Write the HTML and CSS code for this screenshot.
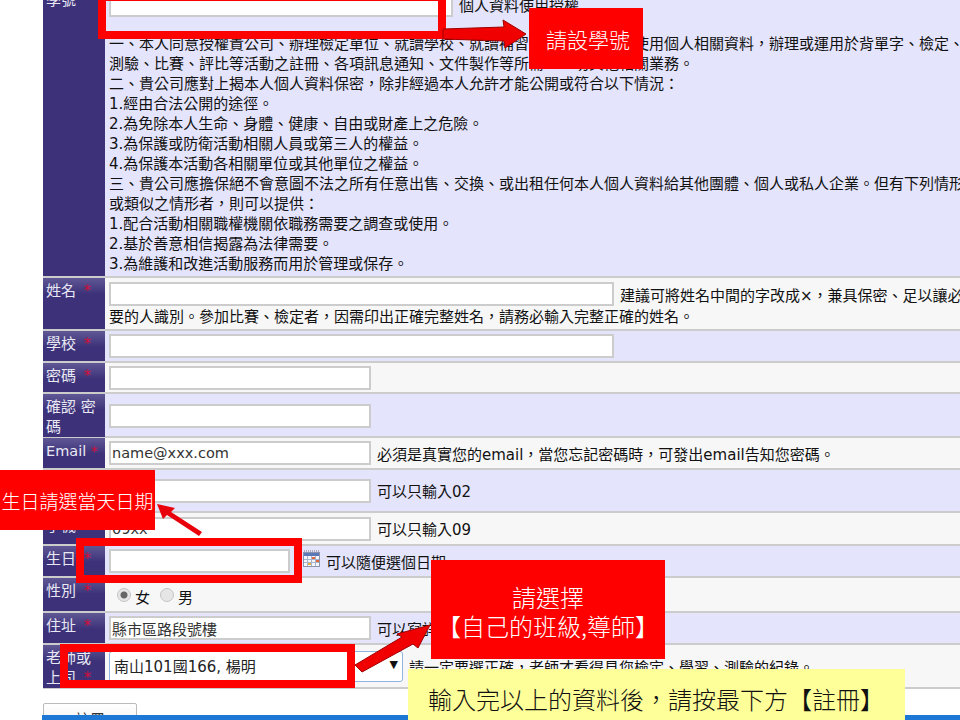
FILE: index.html
```html
<!DOCTYPE html>
<html lang="zh-Hant">
<head>
    <meta charset="UTF-8">
    <meta name="viewport" content="width=device-width, initial-scale=1.0">
    <title>註冊</title>
    <link rel="stylesheet" href="styles.css">
</head>
<body>

<form class="signup">
    <div class="row odd">
        <label class="name">學號 <span class="star">*</span></label>
        <div class="field block">
            <div class="line-input">
                <input type="text" class="input-wide">
                <span>個人資料使用授權</span>
            </div>
            <div class="terms">
                一、本人同意授權貴公司、辦理檢定單位、就讀學校、就讀補習班或相關單位，使用個人相關資料，辦理或運用於背單字、檢定、學習、<br>
                測驗、比賽、評比等活動之註冊、各項訊息通知、文件製作等所需、一切其他相關業務。<br>
                二、貴公司應對上揭本人個人資料保密，除非經過本人允許才能公開或符合以下情況：<br>
                1.經由合法公開的途徑。<br>
                2.為免除本人生命、身體、健康、自由或財產上之危險。<br>
                3.為保護或防衛活動相關人員或第三人的權益。<br>
                4.為保護本活動各相關單位或其他單位之權益。<br>
                三、貴公司應擔保絕不會意圖不法之所有任意出售、交換、或出租任何本人個人資料給其他團體、個人或私人企業。但有下列情形<br>
                或類似之情形者，則可以提供：<br>
                1.配合活動相關職權機關依職務需要之調查或使用。<br>
                2.基於善意相信揭露為法律需要。<br>
                3.為維護和改進活動服務而用於管理或保存。
            </div>
        </div>
    </div>

    <div class="row even">
        <label class="name">姓名 <span class="star">*</span></label>
        <div class="field block name-field">
            <div class="line-input">
                <input type="text" class="input-long">
                <span>建議可將姓名中間的字改成×，兼具保密、足以讓必</span>
            </div>
            <div class="terms">要的人識別。參加比賽、檢定者，因需印出正確完整姓名，請務必輸入完整正確的姓名。</div>
        </div>
    </div>

    <div class="row odd">
        <label class="name">學校 <span class="star">*</span></label>
        <div class="field"><input type="text" class="input-long"></div>
    </div>

    <div class="row even">
        <label class="name">密碼 <span class="star">*</span></label>
        <div class="field"><input type="password" class="input-short"></div>
    </div>

    <div class="row odd">
        <label class="name">確認 密碼</label>
        <div class="field"><input type="password" class="input-short"></div>
    </div>

    <div class="row even">
        <label class="name name-latin">Email <span class="star">*</span></label>
        <div class="field">
            <input type="text" class="input-short latin" value="name@xxx.com">
            <span>必須是真實您的email，當您忘記密碼時，可發出email告知您密碼。</span>
        </div>
    </div>

    <div class="row odd">
        <label class="name">電話 <span class="star">*</span></label>
        <div class="field">
            <input type="text" class="input-short latin" value="02xx">
            <span>可以只輸入02</span>
        </div>
    </div>

    <div class="row even">
        <label class="name">手機 <span class="star">*</span></label>
        <div class="field">
            <input type="text" class="input-short latin" value="09xx">
            <span>可以只輸入09</span>
        </div>
    </div>

    <div class="row odd">
        <label class="name">生日 <span class="star">*</span></label>
        <div class="field">
            <input type="text" class="input-date">
            <svg class="calendar" width="18" height="18" viewBox="0 0 18 18">
                <rect x="0.500" y="2.500" width="16" height="14" fill="#f4f6fb" stroke="#8a94ac"/>
                <path d="M1 1h15" stroke="#777" stroke-dasharray="1 1"/>
                <rect x="1" y="3" width="15" height="3" fill="#5c78b8"/>
                <path d="M1 9.500h15M1 12.500h15M4.500 6v10M8.500 6v10M12.500 6v10" stroke="#a9b4cc"/>
                <rect x="9" y="7" width="3" height="2" fill="#e2693c"/>
                <rect x="13" y="10" width="3" height="2" fill="#e2693c"/>
                <rect x="5" y="13" width="3" height="2" fill="#e8b23c"/>
            </svg>
            <span>可以隨便選個日期</span>
        </div>
    </div>

    <div class="row even">
        <label class="name">性別 <span class="star">*</span></label>
        <div class="field gender">
            <input type="radio" name="gender" checked><span>女</span>
            <input type="radio" name="gender"><span>男</span>
        </div>
    </div>

    <div class="row odd">
        <label class="name">住址 <span class="star">*</span></label>
        <div class="field">
            <input type="text" class="input-short" value="縣市區路段號樓">
            <span>可以寫詳細地址</span>
        </div>
    </div>

    <div class="row even">
        <label class="name">老師或上司 <span class="star">*</span></label>
        <div class="field">
            <div class="select-wrap">
                <select class="teacher">
                    <option>南山101國166, 楊明</option>
                </select>
                <span class="select-arrow">▼</span>
            </div>
            <span>請一定要選正確，老師才看得見您檢定、學習、測驗的紀錄。</span>
        </div>
    </div>
</form>

<div class="actions">
    <button type="button">註冊</button>
</div>
<div class="footer-bar"></div>

<!-- teacher's annotations on top of the screenshot -->
<div class="frame frame-id"></div>
<div class="frame frame-birthday"></div>
<div class="frame frame-teacher"></div>

<svg class="arrows" width="960" height="720" viewBox="0 0 960 720">
    <polygon class="arrow-big" points="443,29 504,27 503,20 526,34 505,48 504,41 443,39"/>
    <polygon class="arrow-thin" points="157,504 175,508 171,512 202,532 199,536 167,515 163,519"/>
    <polygon class="arrow-big" points="355,665 402,637 397,634 430,625 418,648 413,644 362,672"/>
</svg>

<div class="note note-id">請設學號</div>
<div class="note note-birthday">生日請選當天日期</div>
<div class="note note-teacher">請選擇<br>【自己的班級,導師】</div>
<div class="note-yellow">輸入完以上的資料後，請按最下方【註冊】</div>

</body>
</html>
```

FILE: styles.css
```css
html, body {
    margin: 0;
    height: 720px;
    overflow: hidden;
    background: white;
}
body {
    font-family: "DejaVu Sans", "Noto Sans CJK TC", sans-serif;
    font-size: 15px;
    color: #111;
    position: relative;
}

/* form table */
.signup {
    display: grid;
    grid-template-rows: 288px 53px 32px 31px 44px 32px 43px 33px 32px 35px 32px 44px;
    width: 917px;
    margin: -10px 0 0 43px;
}
.row {
    display: grid;
    grid-template-columns: 62px 1fr;
    border-bottom: 2px solid #ccc;
    box-sizing: border-box;
    min-width: 0;
}
.odd {
    background: #e4e4fc;
}
.even {
    background: #f7f7f7;
}
.name {
    background: linear-gradient(#5f5795, #3d3279 16px);
    color: #e8e8f4;
    padding: 3px 3px 0;
    line-height: 20px;
}
.name-latin {
    white-space: nowrap;
    font-size: 14.500px;
}
.star {
    color: #d0103a;
    margin-left: 3px;
}
.name-latin .star {
    margin-left: 0;
}
.row:first-child .name {
    background: #3d3279;
    padding-top: 0;
}
.field {
    display: flex;
    align-items: center;
    gap: 6px;
    padding: 0 0 0 4px;
    white-space: nowrap;
    min-width: 0;
}
.block {
    display: block;
}
.name-field {
    padding-top: 4px;
}
.line-input {
    display: flex;
    align-items: center;
    gap: 6px;
}
.terms {
    line-height: 20px;
}
.row:first-child .line-input {
    height: 44px;
    padding-bottom: 15px;
    box-sizing: border-box;
}
.name-field .terms {
    margin-top: 1px;
}

input[type="text"], input[type="password"] {
    box-sizing: border-box;
    height: 24px;
    padding: 0 1px;
    border: 2px solid #ccc;
    background: white;
    font: inherit;
    color: #333;
}
input.latin {
    font-size: 14.500px;
}
.input-wide {
    width: 344px;
    flex: none;
}
.input-long {
    width: 505px;
    flex: none;
}
.input-short {
    width: 262px;
}
.input-date {
    width: 181px;
}
.calendar {
    margin-left: 7px;
    margin-right: -1px;
    margin-bottom: 5px;
}

.gender {
    gap: 0;
    padding-left: 9px;
}
.gender input {
    appearance: none;
    box-sizing: border-box;
    margin: 0 4px 0 3px;
    width: 14px;
    height: 14px;
    border: 1px solid #c4c4c4;
    border-radius: 50%;
    background: #e6e6e6;
}
.gender input:checked {
    background: radial-gradient(circle, #666 3px, #e6e6e6 4px);
}
.gender span {
    margin-right: 7px;
    padding-top: 4px;
}

.select-wrap {
    position: relative;
}
.teacher {
    appearance: none;
    width: 294px;
    height: 31px;
    padding: 0 4px;
    border: 1px solid #8fb4e0;
    border-radius: 3px;
    background: white;
    font: inherit;
    color: #222;
}
.select-arrow {
    position: absolute;
    right: 5px;
    top: 7px;
    font-size: 11px;
}

.actions {
    height: 26px;
    box-sizing: border-box;
    padding: 14px 0 0 43px;
    overflow: hidden;
}
button {
    width: 94px;
    height: 30px;
    border: 1px solid #bbb;
    border-radius: 2px;
    background: linear-gradient(#fff, #ececec);
    font: inherit;
    color: #333;
}
.footer-bar {
    height: 5px;
    margin-left: 42px;
    background: #1c78d4;
}

/* annotations */
.frame {
    position: absolute;
    box-sizing: border-box;
    border: 8px solid #f00;
}
.frame-id {
    left: 98px;
    top: -7px;
    width: 348px;
    height: 46px;
}
.frame-birthday {
    left: 76px;
    top: 538px;
    width: 226px;
    height: 45px;
}
.frame-teacher {
    left: 60px;
    top: 644px;
    width: 295px;
    height: 44px;
}
.arrows {
    position: absolute;
    left: 0;
    top: 0;
}
.arrow-big {
    fill: #f00000;
    stroke: #a00000;
}
.arrow-thin {
    fill: #e8000a;
}
.note {
    position: absolute;
    background: #f00;
    color: white;
    text-align: center;
    font-family: "Noto Sans CJK TC", sans-serif;
    font-weight: 300;
}
.note-id {
    left: 529px;
    top: 8px;
    width: 114px;
    height: 61px;
    box-sizing: border-box;
    padding-left: 4px;
    font-size: 21px;
    line-height: 62px;
}
.note-birthday {
    left: 0;
    top: 470px;
    width: 155px;
    height: 60px;
    font-size: 19px;
    line-height: 62px;
}
.note-teacher {
    left: 431px;
    top: 560px;
    width: 234px;
    height: 99px;
    padding-top: 22px;
    box-sizing: border-box;
    font-size: 24px;
    line-height: 29px;
}
.note-yellow {
    position: absolute;
    left: 408px;
    top: 669px;
    width: 497px;
    height: 51px;
    box-sizing: border-box;
    padding-left: 20px;
    background: #ffff99;
    color: #111;
    font-family: "Noto Sans CJK TC", sans-serif;
    font-weight: 300;
    font-size: 24px;
    line-height: 60px;
    white-space: nowrap;
}
```
